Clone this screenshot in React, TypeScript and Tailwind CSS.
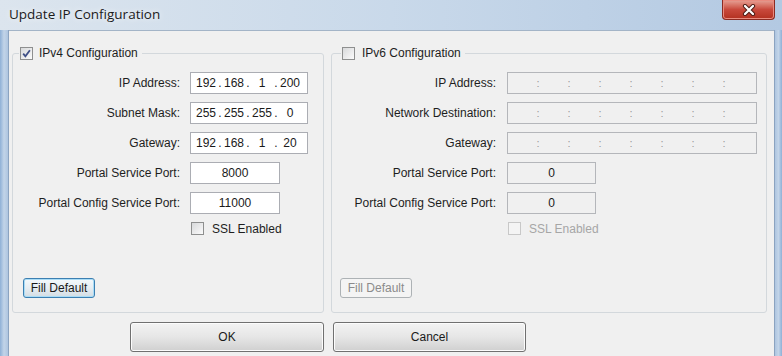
import { Fragment } from "react";

const ui = "font-['Liberation_Sans',Arial,sans-serif]";

function CheckBox({ checked = false, disabled = false }: { checked?: boolean; disabled?: boolean }) {
  return (
    <span
      className={`flex h-[13px] w-[13px] shrink-0 items-center justify-center border ${
        disabled ? "border-[#c8c8c8] bg-[#f4f4f4]" : "border-[#8e8f8f] bg-gradient-to-br from-[#d8d9db] to-[#fbfbfb]"
      }`}
    >
      {checked && (
        <svg width="11" height="11" viewBox="0 0 11 11">
          <path d="M2.2 5.6 L4.4 8.3 L8.9 2.2" fill="none" stroke="#3f4f86" strokeWidth="1.8" />
        </svg>
      )}
    </span>
  );
}

function Ip4({ parts }: { parts: string[] }) {
  return (
    <div className="flex h-[22px] w-[118px] items-center border border-[#abadb3] bg-white pl-[3px] text-[#1a1a1a]">
      {parts.map((p, i) => (
        <Fragment key={i}>
          <span className="w-[24px] text-center">{p}</span>
          {i < 3 && <span className="w-[4px] text-center">.</span>}
        </Fragment>
      ))}
    </div>
  );
}

function Ip6() {
  return (
    <div className="flex h-[22px] w-[250px] items-center border border-[#b4b6ba] bg-[#f0f0f0] pl-[1px] text-[#9a9a9a]">
      {Array.from({ length: 8 }).map((_, i) => (
        <Fragment key={i}>
          <span className="w-[27px]" />
          {i < 7 && <span className="w-[4px] text-center text-[11px]">:</span>}
        </Fragment>
      ))}
    </div>
  );
}

function Port({ value, disabled = false }: { value: string; disabled?: boolean }) {
  return (
    <div
      className={`flex h-[22px] items-center justify-center border ${
        disabled ? "w-[89px] border-[#b4b6ba] bg-[#f0f0f0]" : "w-[90px] border-[#abadb3] bg-white"
      } text-[#1a1a1a]`}
    >
      {value}
    </div>
  );
}

function Row({ label, width, gap, children }: { label: string; width: string; gap: string; children: React.ReactNode }) {
  return (
    <div className={`flex h-[22px] items-center ${gap}`}>
      <span className={`${width} text-right text-[#1e1e1e]`}>{label}</span>
      {children}
    </div>
  );
}

function Button({ children, className = "" }: { children: React.ReactNode; className?: string }) {
  return (
    <button
      className={`flex items-center justify-center rounded-[3px] border border-[#707070] bg-gradient-to-b from-[#f3f3f3] via-[#e6e6e6] to-[#d0d0d0] text-[#1a1a1a] shadow-[inset_0_0_0_1px_#fcfcfc] ${className}`}
    >
      {children}
    </button>
  );
}

export default function App() {
  return (
    <div className={`${ui} relative flex h-[356px] w-[782px] flex-col overflow-hidden bg-gradient-to-r from-[#dce5ee] via-[#c9d9ea] to-[#b3c9e2] text-[12px] leading-[14px]`}>
      {/* title bar */}
      <div className="flex h-[30px] shrink-0 items-center pl-[9px] pb-[3px]">
        <span className="font-['Open_Sans',sans-serif] text-[13.5px] text-[#1b1b1b] [text-shadow:0_0_6px_#ffffff]">
          Update IP Configuration
        </span>
      </div>
      <div className="absolute right-[7px] top-0 flex h-[20px] w-[53px] items-center justify-center rounded-b-[4px] border border-t-0 border-[#8b2b22] bg-gradient-to-b from-[#e6a297] via-[#c9493c] to-[#b3301f] shadow-[inset_0_0_0_1px_#e98b7f]">
        <svg width="14" height="12" viewBox="0 0 14 12">
          <path d="M3 2 L11 10 M11 2 L3 10" stroke="#4b1b14" strokeWidth="4.2" strokeLinecap="round" />
          <path d="M3 2 L11 10 M11 2 L3 10" stroke="#ffffff" strokeWidth="2.3" strokeLinecap="round" />
        </svg>
      </div>

      <div className="flex flex-1">
        {/* left frame */}
        <div className="w-[9px] border-r border-[#8ba3c0] bg-gradient-to-r from-[#8fb0d6] via-[#c2d4e8] to-[#aec5e0]" />

        {/* client area */}
        <div className="flex flex-1 flex-col border-t border-[#a3b4c7] bg-[#f0f0f0] pl-[3px] pr-[5px] pt-[15px]">
          <div className="flex gap-[7px]">
            {/* IPv4 group */}
            <fieldset className="flex w-[312px] flex-col rounded-[3px] border border-[#d3d8dc] pb-[14px] pl-[6px]">
              <legend className="px-[1px]">
                <span className="flex h-[14px] items-center gap-[6px] pr-[3px] text-[#1e1e1e]">
                  <CheckBox checked />
                  IPv4 Configuration
                </span>
              </legend>
              <div className="mt-[12px] flex flex-col gap-[8px]">
                <Row label="IP Address:" width="w-[161px]" gap="gap-[10px]">
                  <Ip4 parts={["192", "168", "1", "200"]} />
                </Row>
                <Row label="Subnet Mask:" width="w-[161px]" gap="gap-[10px]">
                  <Ip4 parts={["255", "255", "255", "0"]} />
                </Row>
                <Row label="Gateway:" width="w-[161px]" gap="gap-[10px]">
                  <Ip4 parts={["192", "168", "1", "20"]} />
                </Row>
                <Row label="Portal Service Port:" width="w-[161px]" gap="gap-[10px]">
                  <Port value="8000" />
                </Row>
                <Row label="Portal Config Service Port:" width="w-[161px]" gap="gap-[10px]">
                  <Port value="11000" />
                </Row>
              </div>
              <div className="ml-[172px] mt-[8px] flex h-[13px] items-center gap-[8px] text-[#1e1e1e]">
                <CheckBox />
                SSL Enabled
              </div>
              <div className="mt-[43px] flex">
                <button className="ml-[4px] flex h-[20px] w-[72px] items-center justify-center rounded-[3px] border border-[#3c7fb1] bg-gradient-to-b from-[#f4f9fc] via-[#e6edf2] to-[#d3dde4] text-[#1a1a1a] shadow-[inset_0_0_0_1px_#a9dcf6]">
                  Fill Default
                </button>
              </div>
            </fieldset>

            {/* IPv6 group */}
            <fieldset className="flex w-[436px] flex-col rounded-[3px] border border-[#d3d8dc] pb-[14px] pl-[9px]">
              <legend className="px-[1px]">
                <span className="flex h-[14px] items-center gap-[7px] pr-[3px] text-[#1e1e1e]">
                  <CheckBox />
                  IPv6 Configuration
                </span>
              </legend>
              <div className="mt-[12px] flex flex-col gap-[8px]">
                <Row label="IP Address:" width="w-[155px]" gap="gap-[11px]">
                  <Ip6 />
                </Row>
                <Row label="Network Destination:" width="w-[155px]" gap="gap-[11px]">
                  <Ip6 />
                </Row>
                <Row label="Gateway:" width="w-[155px]" gap="gap-[11px]">
                  <Ip6 />
                </Row>
                <Row label="Portal Service Port:" width="w-[155px]" gap="gap-[11px]">
                  <Port value="0" disabled />
                </Row>
                <Row label="Portal Config Service Port:" width="w-[155px]" gap="gap-[11px]">
                  <Port value="0" disabled />
                </Row>
              </div>
              <div className="ml-[167px] mt-[8px] flex h-[13px] items-center gap-[8px] text-[#a6a6a6]">
                <CheckBox disabled />
                SSL Enabled
              </div>
              <div className="mt-[43px] flex">
                <button className="-ml-px flex h-[20px] w-[72px] items-center justify-center rounded-[3px] border border-[#adb2b5] bg-[#f4f4f4] text-[#8b8b8b]">
                  Fill Default
                </button>
              </div>
            </fieldset>
          </div>

          <div className="mt-[9px] flex gap-[9px] pl-[118px]">
            <Button className="h-[30px] w-[194px]">OK</Button>
            <Button className="h-[30px] w-[193px]">Cancel</Button>
          </div>
        </div>

        {/* right frame */}
        <div className="w-[8px] border-l border-[#8ba3c0] bg-gradient-to-r from-[#aec5e0] via-[#c2d4e8] to-[#8fb0d6]" />
      </div>
    </div>
  );
}
